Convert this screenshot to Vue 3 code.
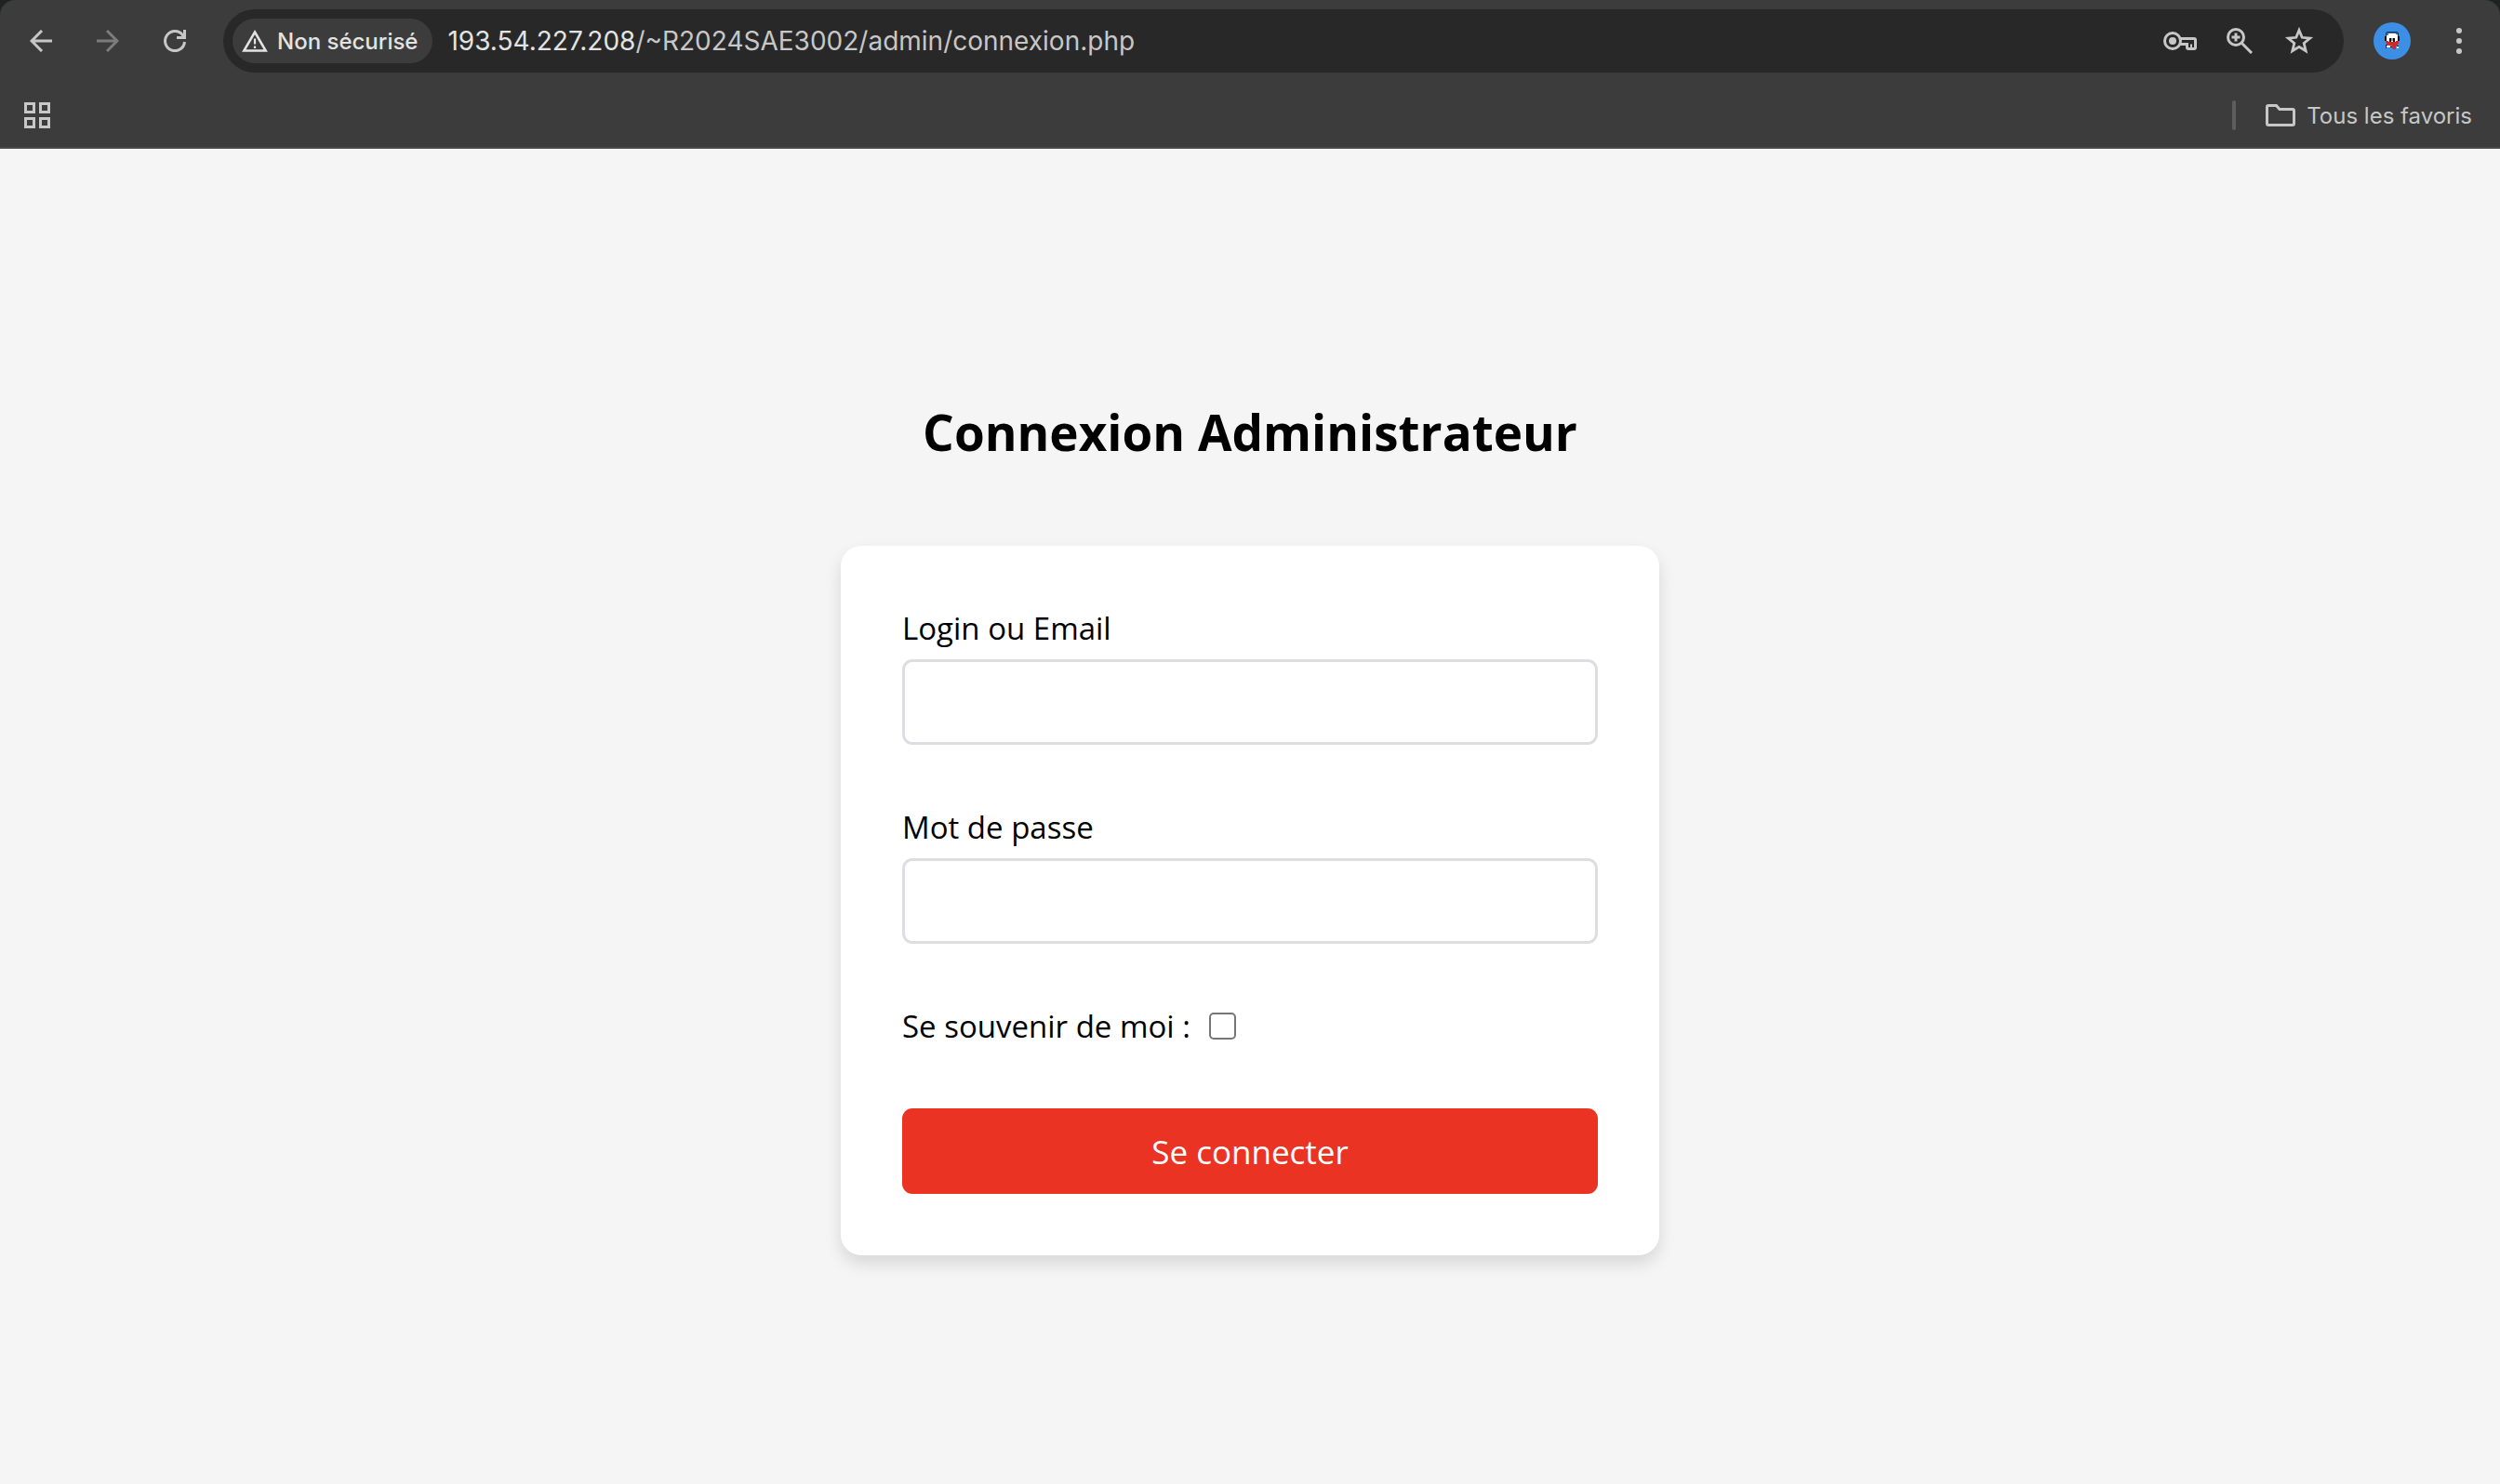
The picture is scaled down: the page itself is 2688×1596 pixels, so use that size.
<script setup>
import { ref } from 'vue'

const login = ref('')
const password = ref('')
const remember = ref(false)
</script>

<template>
  <div class="window">
    <header class="chrome">
      <div class="chrome-panel">
        <div class="toolbar">
          <nav class="nav">
            <button type="button" class="icon-btn" aria-label="Retour">
              <svg width="24" height="24" viewBox="0 0 24 24" fill="none" stroke="currentColor" stroke-width="3">
                <path d="M24 12H2.5M13 1 2 12l11 11" />
              </svg>
            </button>
            <button type="button" class="icon-btn" aria-label="Avancer" disabled>
              <svg width="24" height="24" viewBox="0 0 24 24" fill="none" stroke="currentColor" stroke-width="3">
                <path d="M0 12h21.500M11 1l11 11-11 11" />
              </svg>
            </button>
            <button type="button" class="icon-btn" aria-label="Actualiser">
              <svg width="24" height="24" viewBox="0 0 24 24" fill="none" stroke="currentColor" stroke-width="3">
                <path d="M22.500 13A10.500 10.500 0 1 1 20.500 5.800L22 8" />
                <path d="M22.500 0v8.500H14" />
              </svg>
            </button>
          </nav>

          <div class="address">
            <button type="button" class="chip">
              <svg width="28" height="24" viewBox="0 0 28 24" fill="none" stroke="currentColor">
                <path d="M14 2.500 25.700 22.500H2.300Z" stroke-width="2.500" />
                <path d="M14 9.500v6M14 17.500v2.500" stroke-width="2.200" />
              </svg>
              <span>Non sécurisé</span>
            </button>
            <div class="url"><span class="host">193.54.227.208</span>/~R2024SAE3002/admin/connexion.php</div>
            <div class="actions">
              <button type="button" class="action" aria-label="Mots de passe">
                <svg width="36" height="20" viewBox="0 0 36 20" fill="none" stroke="currentColor" stroke-width="3">
                  <circle cx="10" cy="10" r="8.500" />
                  <circle cx="10" cy="10" r="4" fill="currentColor" stroke="none" />
                  <path d="M17.500 7.500H33q1.500 0 1.500 1.500v8q0 1.500-1.500 1.500h-6q-1.500 0-1.500-1.500v-3.500H18" />
                  <path d="M30 18v-4.500" stroke-width="2" />
                </svg>
              </button>
              <button type="button" class="action" aria-label="Zoom">
                <svg width="28" height="28" viewBox="0 0 28 28" fill="none" stroke="currentColor" stroke-width="3">
                  <circle cx="10" cy="10" r="8.500" />
                  <path d="m16 16 11 11M10 5.500v9M5.500 10h9" />
                </svg>
              </button>
              <button type="button" class="action" aria-label="Ajouter aux favoris">
                <svg width="34" height="32" viewBox="-2 0 34 32" fill="none" stroke="currentColor" stroke-width="2.800">
                  <path d="m16 4.500 3.200 7.800 8.500.7-6.500 5.500 2 8.300-7.200-4.500-7.200 4.500 2-8.300L4.300 13l8.500-.7Z" />
                </svg>
              </button>
            </div>
          </div>

          <div class="side">
            <button type="button" class="avatar" aria-label="Profil">
              <svg width="40" height="40" viewBox="0 0 40 40" shape-rendering="crispEdges">
                <path fill="#16304d" d="M14 10h12v1H14zM13 11h1v4h-1zM26 11h1v4h-1z" />
                <path fill="#2f6fb5" d="M14 11h12v2H14z" />
                <path fill="#111" d="M12 15h3v5h-3zM25 15h3v5h-3z" />
                <path fill="#fff" d="M16 12h8v1h2v8H14v-7h2z" />
                <path fill="#111" d="M12 15h2v5h-2zM26 15h2v5h-2zM17 17h2v4h-2zM21 17h2v4h-2z" />
                <path fill="#999" d="M19 17h2v3h-2z" />
                <path fill="#d3262b" d="M13 20h3v1h8v-1h3v3h-1v2h-2v4h-3v-1h-1v-3h-4v-1h-2v-2h-1z" />
                <path fill="#222" d="M13 24h2v1h-2zM13 25h1v3h-1zM18 26h2v1h-2zM25 25h2v2h-2z" />
                <path fill="#fff" d="M14 25h4v2h-4zM25 26h2v2h-2z" />
              </svg>
            </button>
            <button type="button" class="menu" aria-label="Menu">
              <svg width="6" height="28" viewBox="0 0 6 28" fill="currentColor">
                <circle cx="3" cy="3" r="3" />
                <circle cx="3" cy="14" r="3" />
                <circle cx="3" cy="25" r="3" />
              </svg>
            </button>
          </div>
        </div>

        <div class="bookmarks">
          <button type="button" class="apps" aria-label="Applications">
            <svg width="28" height="28" viewBox="0 0 28 28" fill="none" stroke="currentColor" stroke-width="3">
              <path d="M1.500 1.500h9v9h-9zM17.500 1.500h9v9h-9zM1.500 17.500h9v9h-9zM17.500 17.500h9v9h-9z" />
            </svg>
          </button>
          <div class="all">
            <span class="divider"></span>
            <button type="button" class="folder">
              <svg width="32" height="24" viewBox="0 0 32 24" fill="none" stroke="currentColor" stroke-width="3">
                <path d="M3 1.500h8.500L15 5.500h14q1.500 0 1.500 1.500v14q0 1.500-1.500 1.500H3q-1.500 0-1.500-1.500V3q0-1.500 1.500-1.500Z" />
              </svg>
              <span>Tous les favoris</span>
            </button>
          </div>
        </div>
      </div>
    </header>

    <main class="page">
      <h1>Connexion Administrateur</h1>
      <form class="card" @submit.prevent>
        <div class="field">
          <label for="login">Login ou Email</label>
          <input id="login" v-model="login" class="text" type="text" />
        </div>
        <div class="field">
          <label for="password">Mot de passe</label>
          <input id="password" v-model="password" class="text" type="password" />
        </div>
        <div class="remember">
          <label for="remember">Se souvenir de moi :</label>
          <input id="remember" v-model="remember" class="check" type="checkbox" />
        </div>
        <button type="submit" class="submit">Se connecter</button>
      </form>
    </main>
  </div>
</template>

<style>
body {
  background: #f5f5f5;
}
</style>

<style scoped>
.window {
  display: flex;
  flex-direction: column;
  min-height: 100vh;
}

button {
  display: flex;
  align-items: center;
  justify-content: center;
  padding: 0;
  border: 0;
  background: none;
  color: inherit;
  font: inherit;
}

svg {
  display: block;
  flex: none;
}

.chrome {
  background: #1e2221;
  color: #c7c7c7;
  font-family: Inter, "Liberation Sans", sans-serif;
}

.chrome-panel {
  border-bottom: 2px solid #4a484a;
  border-radius: 16px 16px 0 0;
  background: #3c3c3c;
}

.toolbar {
  display: flex;
  align-items: center;
  gap: 24px;
  height: 88px;
  padding: 0 16px;
}

.nav {
  display: flex;
  gap: 16px;
}

.icon-btn {
  width: 56px;
  height: 56px;
}

.icon-btn:disabled {
  color: #7c7c7c;
}

.address {
  display: flex;
  flex: 1;
  align-items: center;
  height: 68px;
  padding: 0 32px 0 10px;
  border-radius: 34px;
  background: #282828;
}

.chip {
  gap: 10px;
  height: 48px;
  padding: 0 16px 0 10px;
  border-radius: 24px;
  background: #3c3c3c;
  color: #e3e3e3;
  font-size: 24px;
  font-weight: 500;
}

.url {
  flex: 1;
  padding-left: 16px;
  font-size: 28px;
  white-space: nowrap;
}

.host {
  color: #e3e3e3;
}

.actions {
  display: flex;
  align-items: center;
  gap: 32px;
}

.side {
  display: flex;
  align-items: center;
  gap: 40px;
  padding: 0 16px 0 8px;
}

.avatar {
  width: 40px;
  height: 40px;
  border-radius: 50%;
  background: #3d8fe6;
}

.menu {
  width: 24px;
  height: 40px;
}

.bookmarks {
  display: flex;
  align-items: center;
  justify-content: space-between;
  height: 68px;
  padding: 2px 30px 0 26px;
}

.all {
  display: flex;
  align-items: center;
  gap: 32px;
}

.divider {
  width: 4px;
  height: 32px;
  border-radius: 2px;
  background: #5e5e5e;
}

.folder {
  gap: 12px;
  font-size: 24px;
}

.page {
  display: flex;
  flex: 1;
  flex-direction: column;
  align-items: center;
  padding: 268px 24px 88px;
  color: #000;
  font-family: "Open Sans", "Noto Sans", sans-serif;
  font-size: 33px;
  line-height: 45px;
}

h1 {
  margin: 0 0 86px;
  font-size: 53px;
  font-weight: 700;
  line-height: 73px;
}

.card {
  display: flex;
  flex-direction: column;
  gap: 66px;
  box-sizing: border-box;
  width: 100%;
  max-width: 880px;
  padding: 66px;
  border-radius: 22px;
  background: #fff;
  box-shadow: 0 9px 18px rgba(0, 0, 0, 0.12);
}

.field {
  display: flex;
  flex-direction: column;
  gap: 11px;
}

.text {
  box-sizing: border-box;
  width: 100%;
  height: 92px;
  padding: 0 22px;
  border: 3px solid #dddde2;
  border-radius: 11px;
  background: #fff;
  font: inherit;
}

.remember {
  display: flex;
  align-items: center;
  gap: 20px;
}

.check {
  width: 29px;
  height: 29px;
  margin: 0;
  border: 2px solid #767676;
  border-radius: 5px;
  background: #fff;
  appearance: none;
}

.check:checked {
  background: #ea3323;
}

.submit {
  height: 92px;
  border-radius: 11px;
  background: #ea3323;
  color: #fff;
  font-size: 35px;
}
</style>
